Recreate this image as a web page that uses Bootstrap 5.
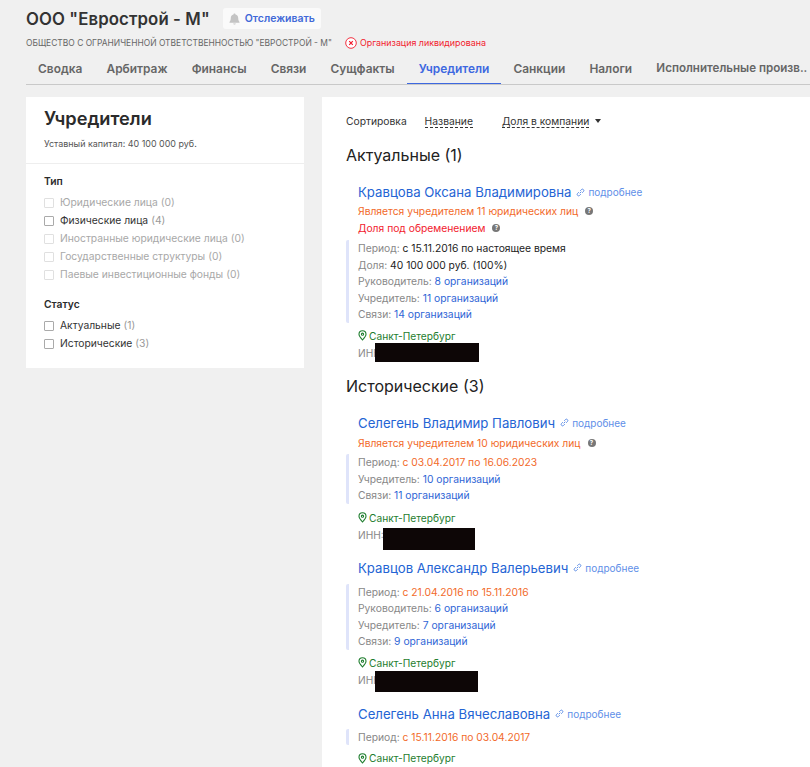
<!DOCTYPE html>
<html lang="ru"><head><meta charset="utf-8">
<link href="https://cdn.jsdelivr.net/npm/bootstrap@5.3.0/dist/css/bootstrap.min.css" rel="stylesheet">
<style>
html,body{height:767px;overflow:hidden}
body{background:#f0f0f0;font-family:Inter,"Noto Sans",sans-serif;font-size:11px;color:#222;width:810px}
.hdr{padding:8px 0 0 26px}
.ttl{font-size:16.8px;font-weight:600;color:#333;line-height:20px;margin:0;letter-spacing:.1px;white-space:nowrap}
.watch{background:#fafafa;border-radius:3px;height:21px;padding:0 6px;margin-left:13px;font-size:10.5px;font-weight:600;color:#4169d8;gap:5px}
.subl{margin-top:6px;height:16px;font-size:8.45px;color:#666;white-space:nowrap}
.liq{color:#f21c2e;font-size:8.9px;margin-left:13px;gap:3px}
.tabs{border-bottom:1px solid #c9c9c9;margin-top:4px;height:30px;flex-wrap:nowrap;white-space:nowrap;gap:0;overflow:hidden}
.tabs .nav-link{padding:0 12.1px;line-height:27px;height:29px;font-size:11.9px;font-weight:600;color:#666;border-bottom:1px solid transparent;border-radius:0}
.tabs .nav-link.active{color:#3d68e0;border-bottom-color:#3d68e0;background:none}
.tabs .nav-link.longtab{font-size:11.6px}
.cols{padding-top:12px;gap:18px;align-items:flex-start}
.side{width:278px;height:271px;background:#fff;flex:none}
.side-top{height:67px;padding:9px 18px 0;border-bottom:1px solid #eee}
.side h2{font-size:18.2px;font-weight:600;line-height:24px;margin:0;color:#2b2b2b}
.cap{font-size:8.95px;color:#555;margin-top:7px;line-height:14px}
.filt{padding:9px 18px 0}
.fh{font-size:10.3px;font-weight:600;line-height:16px;color:#2b2b2b;margin-bottom:5px}
.fi{display:flex;align-items:center;height:18px;font-size:10.3px;color:#333;white-space:nowrap}
.fi i{width:10px;height:10px;border:1px solid #aaa;border-radius:1px;margin-right:6px;flex:none}
.fi.off{color:#a8a8a8}.fi.off i{border-color:#e0e0e0}
.fi span{color:#999;margin-left:3px}.fi.off span{color:#a8a8a8}
.fi2{margin-top:12px}
.main{width:488px;height:670px;background:#fff;padding:16px 0 0 24px;overflow:hidden;flex:none}
.sort{font-size:10.3px;color:#333;line-height:16px;height:16px}
.sort u{text-decoration:none;border-bottom:1px dashed #333;margin-left:15px;line-height:13px}
.sort u+u{margin-left:29px}
.caret{display:inline-block;border:3px solid transparent;border-top:4px solid #333;border-bottom:0;margin-left:6px;vertical-align:2px}
.sec{font-size:16px;font-weight:400;line-height:22px;color:#222;margin:0}
.sec1{margin-top:15px}.sec2{margin-top:14px}
.per{padding-left:12px;position:relative}
.per1{margin-top:17px}.per2{margin-top:17px}.per3{margin-top:16px}.per4{margin-top:17px}
.nm{font-size:13.2px;line-height:18px;color:#2464d4;white-space:nowrap;display:flex;align-items:center}
.more{font-size:10px;color:#5f8fe8;margin-left:5px;display:inline-flex;align-items:center;gap:3px}
.ln{font-size:10.3px;line-height:16.5px;white-space:nowrap}
.lead1{margin-top:2px}.lead2{margin-top:3px}
.or{color:#f26a2a}.rd{color:#f21c2e}
.hint{display:inline-block;width:8px;height:8px;border-radius:50%;background:#777;margin-left:7px;vertical-align:2px;color:#fff;font-size:6px;line-height:8px;text-align:center;font-weight:700}
.bar{border-left:3px solid #dfe4fa;border-radius:2px;margin-left:-12px;padding-left:9px;margin-top:4px}
.bar.tight{margin-top:3px;margin-bottom:6px}
.bar.solo{margin-top:7px}
.bar.solo2{margin-top:6px}
.gr{color:#888}.bl{color:#2f66d6}.dk{color:#222}
.geo{color:#1e7d2e;font-size:10.2px;line-height:16px;margin-top:5px;display:flex;align-items:center;gap:2px}
.inn{color:#888;font-size:10.2px;line-height:16px;position:relative;height:16px;margin-top:1px}
.ink{position:absolute;background:#0d0606;display:block}
.ink1{left:17px;top:-2px;width:104px;height:19px}
.ink2{left:25px;top:1px;width:92px;height:22px}
.ink3{left:17px;top:-1px;width:103px;height:21px}
</style></head><body>
<div class="hdr">
 <div class="d-flex align-items-center"><h1 class="ttl">ООО "Еврострой - М"</h1>
  <div class="watch d-flex align-items-center"><svg width="11" height="12" viewBox="0 0 11 12"><path d="M5.5 0.5c.6 0 1 .4 1 1 1.800.4 2.700 1.800 2.700 3.600 0 2 .5 3 1.300 3.900v.7H.5V9c.8-.9 1.300-1.900 1.300-3.900 0-1.800.9-3.200 2.700-3.600 0-.6.4-1 1-1zM4.200 10.400h2.600c0 .7-.6 1.200-1.300 1.200s-1.300-.5-1.300-1.200z" fill="#c4c4c4"/></svg>Отслеживать</div></div>
 <div class="subl d-flex align-items-center"><span>ОБЩЕСТВО С ОГРАНИЧЕННОЙ ОТВЕТСТВЕННОСТЬЮ "ЕВРОСТРОЙ - М"</span>
  <span class="liq d-inline-flex align-items-center"><svg width="12" height="12" viewBox="0 0 12 12"><circle cx="6" cy="6" r="5.300" fill="#fff" stroke="#f21c2e" stroke-width=".9"/><path d="M4.200 4.200l3.600 3.600M7.800 4.200l-3.600 3.600" stroke="#f21c2e" stroke-width="1.200"/></svg>Организация ликвидирована</span></div>
 <ul class="nav tabs">
  <li class="nav-item"><a class="nav-link" href="#">Сводка</a></li>
  <li class="nav-item"><a class="nav-link" href="#">Арбитраж</a></li>
  <li class="nav-item"><a class="nav-link" href="#">Финансы</a></li>
  <li class="nav-item"><a class="nav-link" href="#">Связи</a></li>
  <li class="nav-item"><a class="nav-link" href="#">Сущфакты</a></li>
  <li class="nav-item"><a class="nav-link active" href="#">Учредители</a></li>
  <li class="nav-item"><a class="nav-link" href="#">Санкции</a></li>
  <li class="nav-item"><a class="nav-link" href="#">Налоги</a></li>
  <li class="nav-item"><a class="nav-link longtab" href="#">Исполнительные произв..</a></li>
 </ul>
 <div class="cols d-flex">
  <aside class="side">
   <div class="side-top"><h2>Учредители</h2><div class="cap">Уставный капитал: 40 100 000 руб.</div></div>
   <div class="filt">
    <div class="fh">Тип</div>
    <div class="fi off"><i></i>Юридические лица<span>(0)</span></div>
    <div class="fi"><i></i>Физические лица<span>(4)</span></div>
    <div class="fi off"><i></i>Иностранные юридические лица<span>(0)</span></div>
    <div class="fi off"><i></i>Государственные структуры<span>(0)</span></div>
    <div class="fi off"><i></i>Паевые инвестиционные фонды<span>(0)</span></div>
    <div class="fh fi2">Статус</div>
    <div class="fi"><i></i>Актуальные<span>(1)</span></div>
    <div class="fi"><i></i>Исторические<span>(3)</span></div>
   </div>
  </aside>
  <main class="main">
   <div class="sort">Сортировка <u>Название</u><u>Доля в компании</u><b class="caret"></b></div>
   <h3 class="sec sec1">Актуальные (1)</h3>
   <div class="per per1">
    <div class="nm">Кравцова Оксана Владимировна<span class="more"><svg width="9" height="9" viewBox="0 0 9 9" fill="none" stroke="#5f8fe8" stroke-width="1"><path d="M3.700 5.300l1.600-1.600M2.800 4.200L1.600 5.400a1.400 1.400 0 0 0 2 2l1.200-1.200M4.200 2.800l1.200-1.200a1.400 1.400 0 0 1 2 2L6.200 4.800"/></svg>подробнее</span></div>
    <div class="ln or lead1">Является учредителем 11 юридических лиц<b class="hint">?</b></div>
    <div class="ln rd">Доля под обременением<b class="hint">?</b></div>
    <div class="bar">
     <div class="ln gr">Период: <span class="dk">с 15.11.2016 по настоящее время</span></div>
     <div class="ln gr">Доля: <span class="dk">40 100 000 руб. (100%)</span></div>
     <div class="ln gr">Руководитель: <span class="bl">8 организаций</span></div>
     <div class="ln gr">Учредитель: <span class="bl">11 организаций</span></div>
     <div class="ln gr">Связи: <span class="bl">14 организаций</span></div>
    </div>
    <div class="geo"><svg width="9" height="11" viewBox="0 0 9 11" fill="none" stroke="#1e7d2e" stroke-width="1.100"><path d="M4.500 10C2.500 7.800 1 6 1 4.300a3.500 3.500 0 0 1 7 0C8 6 6.500 7.800 4.500 10z"/><circle cx="4.500" cy="4.200" r="1.100"/></svg>Санкт-Петербург</div>
    <div class="inn">ИНН:<b class="ink ink1"></b></div>
   </div>
   <h3 class="sec sec2">Исторические (3)</h3>
   <div class="per per2">
    <div class="nm">Селегень Владимир Павлович<span class="more"><svg width="9" height="9" viewBox="0 0 9 9" fill="none" stroke="#5f8fe8" stroke-width="1"><path d="M3.700 5.300l1.600-1.600M2.800 4.200L1.600 5.400a1.400 1.400 0 0 0 2 2l1.200-1.200M4.200 2.800l1.200-1.200a1.400 1.400 0 0 1 2 2L6.200 4.800"/></svg>подробнее</span></div>
    <div class="ln or lead2">Является учредителем 10 юридических лиц<b class="hint">?</b></div>
    <div class="bar tight">
     <div class="ln gr">Период: <span class="or">с 03.04.2017 по 16.06.2023</span></div>
     <div class="ln gr">Учредитель: <span class="bl">10 организаций</span></div>
     <div class="ln gr">Связи: <span class="bl">11 организаций</span></div>
    </div>
    <div class="geo"><svg width="9" height="11" viewBox="0 0 9 11" fill="none" stroke="#1e7d2e" stroke-width="1.100"><path d="M4.500 10C2.500 7.800 1 6 1 4.300a3.500 3.500 0 0 1 7 0C8 6 6.500 7.800 4.500 10z"/><circle cx="4.500" cy="4.200" r="1.100"/></svg>Санкт-Петербург</div>
    <div class="inn">ИНН:<b class="ink ink2"></b></div>
   </div>
   <div class="per per3">
    <div class="nm">Кравцов Александр Валерьевич<span class="more"><svg width="9" height="9" viewBox="0 0 9 9" fill="none" stroke="#5f8fe8" stroke-width="1"><path d="M3.700 5.300l1.600-1.600M2.800 4.200L1.600 5.400a1.400 1.400 0 0 0 2 2l1.200-1.200M4.200 2.800l1.200-1.200a1.400 1.400 0 0 1 2 2L6.200 4.800"/></svg>подробнее</span></div>
    <div class="bar solo">
     <div class="ln gr">Период: <span class="or">с 21.04.2016 по 15.11.2016</span></div>
     <div class="ln gr">Руководитель: <span class="bl">6 организаций</span></div>
     <div class="ln gr">Учредитель: <span class="bl">7 организаций</span></div>
     <div class="ln gr">Связи: <span class="bl">9 организаций</span></div>
    </div>
    <div class="geo"><svg width="9" height="11" viewBox="0 0 9 11" fill="none" stroke="#1e7d2e" stroke-width="1.100"><path d="M4.500 10C2.500 7.800 1 6 1 4.300a3.500 3.500 0 0 1 7 0C8 6 6.500 7.800 4.500 10z"/><circle cx="4.500" cy="4.200" r="1.100"/></svg>Санкт-Петербург</div>
    <div class="inn">ИНН:<b class="ink ink3"></b></div>
   </div>
   <div class="per per4">
    <div class="nm">Селегень Анна Вячеславовна<span class="more"><svg width="9" height="9" viewBox="0 0 9 9" fill="none" stroke="#5f8fe8" stroke-width="1"><path d="M3.700 5.300l1.600-1.600M2.800 4.200L1.600 5.400a1.400 1.400 0 0 0 2 2l1.200-1.200M4.200 2.800l1.200-1.200a1.400 1.400 0 0 1 2 2L6.200 4.800"/></svg>подробнее</span></div>
    <div class="bar solo2"><div class="ln gr">Период: <span class="or">с 15.11.2016 по 03.04.2017</span></div></div>
    <div class="geo"><svg width="9" height="11" viewBox="0 0 9 11" fill="none" stroke="#1e7d2e" stroke-width="1.100"><path d="M4.500 10C2.500 7.800 1 6 1 4.300a3.500 3.500 0 0 1 7 0C8 6 6.500 7.800 4.500 10z"/><circle cx="4.500" cy="4.200" r="1.100"/></svg>Санкт-Петербург</div>
   </div>
  </main>
 </div>
</div>
</body></html>
